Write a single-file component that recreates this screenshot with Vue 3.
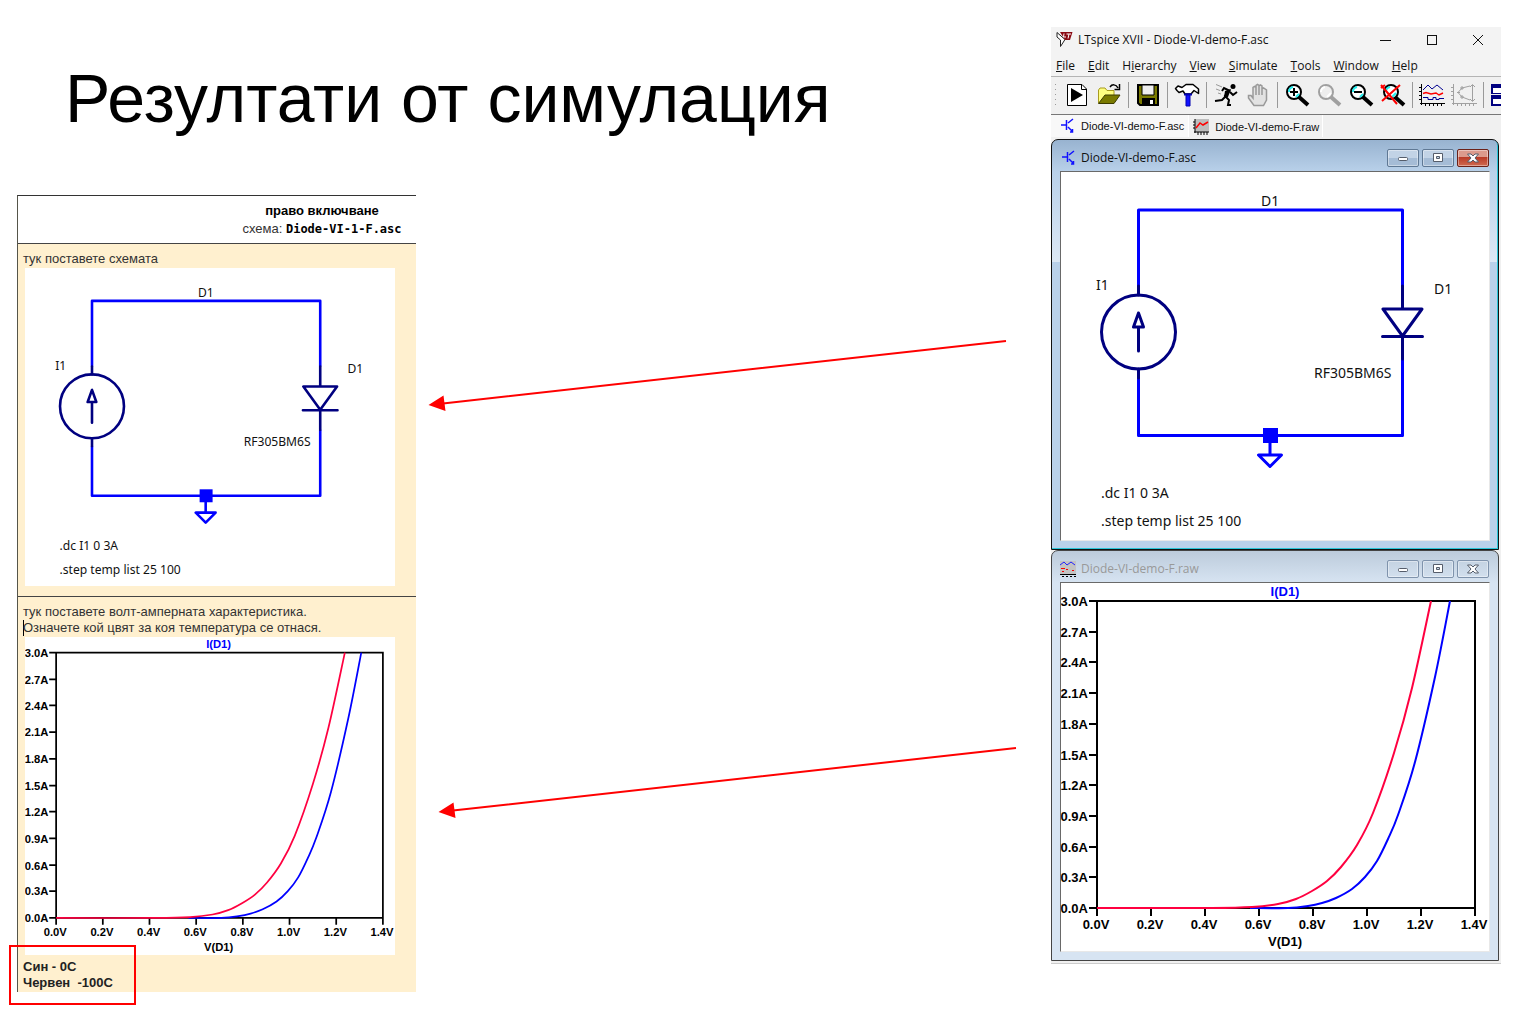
<script setup>
const wires = 'M76.5 114V38H340.5V114M340.5 187V263.5H76.5V206M208 264V283M196.5 283H219.5L208 294.5Z'
const parts =
  'M76.5 114V123M76.5 197V206M76.5 179V155M71.5 155H81.5L76.5 141Z' +
  'M340.5 114V137M340.5 164V187M321 137H360L340.5 164ZM320.5 164.5H360.5'
const labels = [
  { x: 199, y: 34, text: 'D1' },
  { x: 34, y: 118, text: 'I1' },
  { x: 372, y: 122, text: 'D1' },
  { x: 252, y: 206, text: 'RF305BM6S' },
  { x: 39, y: 326, text: '.dc I1 0 3A' },
  { x: 39, y: 354, text: '.step temp list 25 100' },
]

const left = 35
const right = 413
const top = 18
const bottom = 325
const xTicks = Array.from({ length: 8 }, (_, i) => ({
  pos: Math.round(left + (i * (right - left)) / 7),
  text: (i * 0.2).toFixed(1) + 'V',
}))
const yTicks = Array.from({ length: 11 }, (_, i) => ({
  pos: Math.round(bottom - (i * (bottom - top)) / 10),
  text: (i * 0.3).toFixed(1) + 'A',
}))
const axes =
  `M${left} ${top}H${right}V${bottom}H${left}Z` +
  xTicks.map((t) => `M${t.pos} ${bottom}v8`).join('') +
  yTicks.map((t) => `M${left} ${t.pos}h-8`).join('')

// Smooth line through the sampled points (Catmull-Rom as cubic Béziers)
function curve(p) {
  let d = `M${p[0]}`
  for (let i = 0; i < p.length - 1; i++) {
    const a = p[i - 1] || p[i]
    const b = p[i]
    const c = p[i + 1]
    const e = p[i + 2] || c
    d += `C${b[0] + (c[0] - a[0]) / 6} ${b[1] + (c[1] - a[1]) / 6} ${c[0] - (e[0] - b[0]) / 6} ${c[1] - (e[1] - b[1]) / 6} ${c}`
  }
  return d
}
const hot = curve([[35, 325], [150, 325], [190, 324], [216, 321], [234, 316], [250, 308], [265, 298], [279, 284], [295, 262], [311, 230], [332, 170], [350, 105], [369, 18]])
const cold = curve([[188, 325], [226, 325], [246, 323], [260, 320], [274, 315], [290, 306], [303, 294], [315, 278], [326, 256], [336, 232], [353, 179], [373, 94], [388, 18]])

const menus = ['File', 'Edit', 'Hierarchy', 'View', 'Simulate', 'Tools', 'Window', 'Help'].map((name) => {
  const at = name === 'Hierarchy' ? 1 : 0
  return { name, pre: name.slice(0, at), key: name[at], post: name.slice(at + 1) }
})
const children = [
  { title: 'Diode-VI-demo-F.asc', active: true },
  { title: 'Diode-VI-demo-F.raw', active: false },
]
</script>

<template>
  <main class="slide">
    <div class="body">
      <h1>Резултати от симулация</h1>
      <div class="content">
        <article class="report">
          <header class="report-head">
            <strong>право включване</strong>
            <div>схема: <code>Diode-VI-1-F.asc</code></div>
          </header>
          <section class="cell">
            <p>тук поставете схемата</p>
            <figure>
              <svg viewBox="-1 0 428 368" class="drawing">
                <path :d="wires" class="wire" />
                <rect x="201" y="256" width="15" height="15" class="node" />
                <circle cx="76.5" cy="160" r="37" class="part" />
                <path :d="parts" class="part" />
                <text v-for="l in labels" :key="l.text + l.x" :x="l.x" :y="l.y" class="label">{{ l.text }}</text>
              </svg>
            </figure>
          </section>
          <section class="cell last">
            <p>тук поставете волт-амперната характеристика.</p>
            <p class="caret">Означете кой цвят за коя температура се отнася.</p>
            <figure>
              <svg viewBox="-1 0 428 368" class="drawing">
                <path :d="axes" class="axes" />
                <path :d="cold" class="cold" />
                <path :d="hot" class="hot" />
                <text x="223" y="13" class="tick mid trace">I(D1)</text>
                <text v-for="t in yTicks" :key="t.text" x="26" :y="t.pos + 5" class="tick end">{{ t.text }}</text>
                <text v-for="t in xTicks" :key="t.text" :x="t.pos - 1" y="346" class="tick mid">{{ t.text }}</text>
                <text x="223" y="363" class="tick mid">V(D1)</text>
              </svg>
            </figure>
            <div class="notes">
              <p>Син - 0C</p>
              <p>Червен&nbsp; -100C</p>
              <span class="mark"></span>
            </div>
          </section>
        </article>
        <svg viewBox="0 0 635 797" class="arrows">
          <path d="M590 146L27 208.500M600 553L37 615.500" />
          <path d="M12.500 210L27.500 200.500L29.500 216ZM22.500 617L37.500 607.500L39.500 623Z" class="head" />
        </svg>
      </div>
    </div>

    <section class="app">
      <header class="app-title">
        <svg width="17" height="17" viewBox="0 0 17 17">
          <path d="M1 1.500L9 8.500L4.500 15.500V9L1 6Z" fill="#fff" stroke="#222" />
          <path d="M4 1H16.500L14 9H9Z" fill="#8b0a14" />
          <path d="M8 2.500L7.500 6H10M10.500 3H15M13 3L12 7.500" fill="none" stroke="#fff" />
        </svg>
        <span class="app-name">LTspice XVII - Diode-VI-demo-F.asc</span>
        <button aria-label="Minimize"><svg width="12" height="12"><path d="M0 6.500H11" /></svg></button>
        <button aria-label="Maximize"><svg width="12" height="12"><rect x="1.500" y="1.500" width="9" height="9" /></svg></button>
        <button aria-label="Close"><svg width="12" height="12"><path d="M1 1L11 11M11 1L1 11" /></svg></button>
      </header>
      <nav class="menu">
        <button v-for="m in menus" :key="m.name">{{ m.pre }}<u>{{ m.key }}</u>{{ m.post }}</button>
      </nav>
      <div class="toolbar">
        <span class="grip"></span>
        <button aria-label="Run">
          <svg width="24" height="24" viewBox="0 0 24 24">
            <path d="M2.500 1.500H17L21.500 6V22.500H2.500Z" fill="#fff" stroke="#000" />
            <path d="M16.500 1.500V6.500H21.500" fill="none" stroke="#000" />
            <path d="M6 5L18 12L6 19Z" />
          </svg>
        </button>
        <button aria-label="Open">
          <svg width="24" height="24" viewBox="0 0 24 24">
            <path d="M1.500 20V7L3 5H8L10 7.500H17V12" fill="#ffff80" stroke="#a89c20" />
            <path d="M1.500 20.500L8 12H23L17 20.500Z" fill="#7a7a00" stroke="#3c3c00" />
            <path d="M13 4C15 1 19 1 21 5M22.500 1V6.500H17.500" fill="none" stroke="#000" stroke-width="1.500" />
          </svg>
        </button>
        <i></i>
        <button aria-label="Save">
          <svg width="24" height="24" viewBox="0 0 24 24">
            <path d="M2 2H22V22H4L2 20Z" fill="#7a7a00" stroke="#000" stroke-width="2" />
            <path d="M6 2H18V12H6Z" fill="#efefef" stroke="#000" />
            <path d="M6 15H19V22H6Z" />
            <path d="M14 17H17V21H14Z" fill="#fff" />
          </svg>
        </button>
        <i></i>
        <button aria-label="Control panel">
          <svg width="26" height="24" viewBox="0 0 26 24">
            <path d="M1.500 5.500L4 3L8 4.500L12 1.500H19L24.500 6V10.500L20 7.500L17 11H11L9 8L5 9.500L3 7.500Z" fill="#fff" stroke="#000" stroke-width="1.500" stroke-linejoin="round" />
            <path d="M12 11H16V23H12Z" fill="#1010ff" stroke="#0000b0" />
            <path d="M10 11.500H18" stroke="#0000b0" stroke-width="2" />
          </svg>
        </button>
        <i></i>
        <button aria-label="Simulate">
          <svg width="24" height="24" viewBox="0 0 24 24">
            <circle cx="19" cy="3.500" r="2.500" />
            <path d="M16 7L11 13L15 17L14 22L17 22M12 13L8 17L1 18M16 8L10 5L8 8M16 9L19 12L23 9" fill="none" stroke="#000" stroke-width="2" />
            <path d="M17 6L11 8L10 14L14 14Z" />
            <path d="M2 1.500L8 4M2 6L6 7.500M4 10L7 11" stroke="#999" />
          </svg>
        </button>
        <button aria-label="Halt">
          <svg width="24" height="24" viewBox="0 0 24 24">
            <path d="M8 22.500L2.500 15V12.500H5L7 15V4.500L8.500 3.500L10 4.500V12V2.500L11.500 1.500L13 2.500V12V3L14.500 2L16 3V12V6L17.500 5L20.500 7V17L17.500 22.500Z" fill="#e2e2e2" stroke="#999" stroke-width="1.500" />
          </svg>
        </button>
        <i></i>
        <button aria-label="Zoom in">
          <svg width="26" height="24" viewBox="0 0 26 24">
            <path d="M15 14L24 22" stroke="#000" stroke-width="4" />
            <circle cx="10" cy="9" r="7" fill="#fff" stroke="#000" stroke-width="2" />
            <path d="M5 9A5 5 0 0 1 9 4M12 14L15 11" fill="none" stroke="#2ee" stroke-width="2" />
            <path d="M6 9H14M10 5V13" stroke="#000" stroke-width="2" />
          </svg>
        </button>
        <button aria-label="Pan">
          <svg width="26" height="24" viewBox="0 0 26 24">
            <path d="M15 14L24 22" stroke="#a0a0a0" stroke-width="4" />
            <circle cx="10" cy="9" r="7" fill="#eee" stroke="#a0a0a0" stroke-width="2" />
            <path d="M5 9A5 5 0 0 1 9 4M11 14L15 10" fill="none" stroke="#fff" stroke-width="2" />
          </svg>
        </button>
        <button aria-label="Zoom out">
          <svg width="26" height="24" viewBox="0 0 26 24">
            <path d="M15 14L24 22" stroke="#000" stroke-width="4" />
            <circle cx="10" cy="9" r="7" fill="#fff" stroke="#000" stroke-width="2" />
            <path d="M5 9A5 5 0 0 1 9 4M12 14L15 11" fill="none" stroke="#2ee" stroke-width="2" />
            <path d="M6 9H14" stroke="#000" stroke-width="2" />
          </svg>
        </button>
        <button aria-label="Zoom to fit">
          <svg width="26" height="24" viewBox="0 0 26 24">
            <path d="M15 14L24 22" stroke="#000" stroke-width="4" />
            <circle cx="11" cy="9" r="7" fill="#fff" stroke="#000" stroke-width="2" />
            <path d="M6 9A5 5 0 0 1 10 4M12 14L16 10" fill="none" stroke="#2ee" stroke-width="2" />
            <path d="M1 2L17 21M20 2L2 18" stroke="#f00" stroke-width="2" />
            <path d="M1 5L5 2" stroke="#f00" stroke-width="2" />
          </svg>
        </button>
        <i></i>
        <button aria-label="Autorange">
          <svg width="26" height="24" viewBox="0 0 26 24" fill="none">
            <path d="M2.500 1V22M1 20.500H26M0 4.500H2M0 8.500H2M0 12.500H2M0 16.500H2M6.500 20V23M10.500 20V23M14.500 20V23M18.500 20V23M22.500 20V23" stroke="#000" />
            <path d="M4 7L9 2L13 6L18 2L24 7" stroke="#000090" />
            <path d="M4 10.500L7 9.500L12 11L17 10L20 12L24 10" stroke="#f00" stroke-width="1.500" />
            <path d="M4 14.500H9V16.500H14V14.500H17V16.500H20V15.500H25" stroke="#000090" />
          </svg>
        </button>
        <button aria-label="FFT">
          <svg width="26" height="24" viewBox="0 0 26 24" fill="none" stroke="#a0a0a0">
            <path d="M2.500 1V22M1 20.500H26M0 4.500H2M0 8.500H2M0 12.500H2M0 16.500H2M6.500 20V23M10.500 20V23M14.500 20V23M18.500 20V23M22.500 20V23" />
            <path d="M21.500 2V18M19 4L21.500 1.500L24 4M19 16L21.500 18.500L24 16M19 3L11 5L7 9.500L11 14L19 17M6 9.500H9M11 3V7M9 5H13M11 12V16M9 14H13" />
          </svg>
        </button>
        <i></i>
        <button aria-label="Tile windows">
          <svg width="24" height="24" viewBox="0 0 24 24">
            <path d="M0 1H24V23H0Z" fill="#000080" />
            <path d="M2 5H24V10H2ZM2 16H24V21H2Z" fill="#fff" />
            <path d="M0 11.500H24" stroke="#eee" />
          </svg>
        </button>
      </div>
      <div class="tabs">
        <button class="current">
          <svg width="14" height="16" viewBox="0 0 14 16" class="asc"><path d="M0 7H5M5.500 2V12M7 5L12 1M7 9L11 13M11.500 11V14H9" /></svg>
          Diode-VI-demo-F.asc
        </button>
        <button>
          <svg width="16" height="16" viewBox="0 0 16 16">
            <path d="M2 0H16V13H2Z" fill="#bdbdbd" />
            <path d="M2 0V14M1 13H16M0 3H2M0 6H2M0 9H2M5 13V16M8 13V16M11 13V16M14 13V16" stroke="#000" />
            <path d="M3 9L7 4L10 6L15 3" fill="none" stroke="#f00" stroke-width="1.500" />
          </svg>
          Diode-VI-demo-F.raw
        </button>
      </div>

      <section v-for="c in children" :key="c.title" class="child" :class="{ active: c.active }">
        <header>
          <svg v-if="c.active" width="16" height="16" viewBox="-2 0 16 16" class="asc"><path d="M0 7H5M5.500 2V12M7 5L12 1M7 9L11 13M11.500 11V14H9" /></svg>
          <svg v-else width="16" height="16" viewBox="0 0 16 16">
            <path d="M0 0H16V14H0Z" fill="#c3c3c3" />
            <path d="M0 4L4 1L7 4L11 1L15 4" fill="none" stroke="#22f" />
            <path d="M1 7.500H5M6 8.500H8M12 9.500H14M2 10.500H4" stroke="#f00" />
            <path d="M0 13.500H16M2 15.500H4M6 15.500H8M10 15.500H12M14 15.500H16" stroke="#000" />
          </svg>
          <span>{{ c.title }}</span>
          <button aria-label="Minimize"><svg width="12" height="10"><rect x="1.500" y="4.500" width="9" height="3" rx="1" /></svg></button>
          <button aria-label="Restore"><svg width="12" height="10"><path d="M1.500 0.500H10.500V8.500H1.500ZM4.500 3.500H7.500V5.500H4.500Z" fill-rule="evenodd" /></svg></button>
          <button aria-label="Close" class="close"><svg width="12" height="10"><path d="M0.500 1H4L6 3L8 1H11.500L8 5L11.500 9H8L6 7L4 9H0.500L4 5Z" /></svg></button>
        </header>
        <div class="client">
          <svg v-if="c.active" viewBox="-1 0 428 368" class="drawing">
            <path :d="wires" class="wire" />
            <rect x="201" y="256" width="15" height="15" class="node" />
            <circle cx="76.5" cy="160" r="37" class="part" />
            <path :d="parts" class="part" />
            <text v-for="l in labels" :key="l.text + l.x" :x="l.x" :y="l.y" class="label">{{ l.text }}</text>
          </svg>
          <svg v-else viewBox="-1 0 428 368" class="drawing">
            <path :d="axes" class="axes" />
            <path :d="cold" class="cold" />
            <path :d="hot" class="hot" />
            <text x="223" y="13" class="tick mid trace">I(D1)</text>
            <text v-for="t in yTicks" :key="t.text" x="26" :y="t.pos + 5" class="tick end">{{ t.text }}</text>
            <text v-for="t in xTicks" :key="t.text" :x="t.pos - 1" y="346" class="tick mid">{{ t.text }}</text>
            <text x="223" y="363" class="tick mid">V(D1)</text>
          </svg>
        </div>
      </section>
    </section>
  </main>
</template>

<style>
body {
  background: #fff;
}
</style>

<style scoped>
.slide {
  display: grid;
  grid-template-columns: 1034fr 450fr;
  align-items: start;
  padding: 0 16px 20px 17px;
  font-family: 'Liberation Sans', Arial, sans-serif;
  font-size: 13px;
  color: #000;
}
p,
figure {
  margin: 0;
}
button {
  border: 0;
  padding: 0;
  background: none;
  font: inherit;
  color: inherit;
}
svg {
  display: block;
}
h1 {
  margin: 0;
  padding: 59px 0 58px 48px;
  font-size: 68px;
  line-height: 78px;
  font-weight: 400;
}
.content {
  display: grid;
  grid-template-columns: 399fr 635fr;
  align-items: start;
}
.report {
  border-top: 1px solid #333;
  border-left: 1px solid #55554a;
}
.report-head {
  padding: 6px 0 5px 210px;
  text-align: center;
  line-height: 18px;
  white-space: nowrap;
  color: #333;
}
.report-head strong {
  color: #000;
}
code {
  font: bold 12px/18px 'DejaVu Sans Mono', monospace;
  color: #000;
}
.cell {
  padding: 7px 0 10px 5px;
  border-top: 1px solid #444;
  background: #fff0cf;
  line-height: 16px;
  color: #333;
}
.cell.last {
  padding-bottom: 1px;
}
.cell p {
  white-space: nowrap;
}
.caret {
  box-shadow: inset 1px 0 0 #000;
}
figure {
  margin: 1px 21px 0 2px;
  background: #fff;
}
.notes {
  position: relative;
  margin-top: 4px;
  font-weight: 700;
  color: #222;
}
.mark {
  position: absolute;
  left: -14px;
  top: -14px;
  width: 123px;
  height: 56px;
  border: 2px solid #f00;
}
.arrows {
  width: 100%;
  fill: none;
  stroke: #f00;
  stroke-width: 2;
}
.arrows .head {
  fill: #f00;
  stroke: none;
}

.drawing {
  width: 100%;
  height: auto;
  background: #fff;
}
.wire {
  fill: none;
  stroke: #00f;
  stroke-width: 3;
  stroke-linejoin: round;
}
.node {
  fill: #00f;
}
.part {
  fill: none;
  stroke: #000080;
  stroke-width: 3;
  stroke-linecap: round;
  stroke-linejoin: round;
}
.label {
  font: 14px 'Noto Sans', sans-serif;
  fill: #111;
}
.axes,
.hot,
.cold {
  fill: none;
  stroke: #000;
  stroke-width: 2;
}
.hot {
  stroke: #ff0040;
}
.cold {
  stroke: #00f;
}
.tick {
  font: bold 13px 'Liberation Sans', Arial, sans-serif;
}
.mid {
  text-anchor: middle;
}
.end {
  text-anchor: end;
}
.trace {
  fill: #00f;
}

.app {
  margin-top: 27px;
  padding-bottom: 2px;
  background: #f0f0f0;
  border-bottom: 1px solid #ccc;
  font: 12px/16px 'Open Sans', sans-serif;
  color: #111;
  min-width: 0;
}
.app-title {
  display: flex;
  align-items: center;
  height: 25px;
  padding-left: 5px;
  background: #f3f3f3;
}
.app-name {
  flex: 1;
  padding-left: 5px;
  white-space: nowrap;
}
.app-title button {
  display: grid;
  place-items: center;
  width: 46px;
  height: 24px;
}
.app-title button svg {
  fill: none;
  stroke: #111;
}
.menu {
  display: flex;
  gap: 13px;
  height: 21px;
  padding: 3px 0 0 5px;
  background: #f3f3f3;
  border-bottom: 1px solid #b4b4b4;
}
.toolbar {
  display: flex;
  align-items: center;
  height: 35px;
  padding-bottom: 2px;
  border-bottom: 1px solid #777;
  overflow: hidden;
}
.toolbar > * {
  flex: none;
}
.toolbar button {
  display: grid;
  place-items: center;
  width: 32px;
  height: 32px;
}
.toolbar i {
  width: 7px;
  height: 26px;
  background: linear-gradient(#999, #999) 3px 0 / 1px 100% no-repeat;
}
.grip {
  width: 10px;
  height: 26px;
  background: radial-gradient(circle, #999 1px, transparent 1px) 3px 0 / 3px 5px repeat-y;
}
.tabs {
  display: flex;
  align-items: flex-start;
  height: 24px;
  font: 11px/16px 'Liberation Sans', Arial, sans-serif;
}
.tabs button {
  display: flex;
  align-items: center;
  gap: 6px;
  height: 22px;
  padding: 2px 3px 0 4px;
  border-right: 1px solid #fff;
  white-space: nowrap;
}
.tabs .current {
  padding: 0 4px 0 10px;
  background: #f8f8f8;
}
.asc {
  fill: none;
  stroke: #11f;
  stroke-width: 1.5;
}
.child {
  margin-right: 2px;
  padding: 0 8px 8px;
  border: 1px solid #444;
  border-radius: 7px 7px 0 0;
  background: linear-gradient(#bccbdb, #d7e4f2 32px);
  color: #999;
}
.child.active {
  border-color: #111;
  background: linear-gradient(#98b3d0, #b9d1ea 32px, #dce8f5 122px, #b9d1ea 122px);
  box-shadow: inset -1px -1px 0 #29c5d8;
  color: #111;
}
.child header {
  display: flex;
  align-items: center;
  gap: 3px;
  height: 31px;
  padding: 5px 1px 0 0;
  box-sizing: border-box;
}
.child header span {
  flex: 1;
  padding-left: 2px;
  white-space: nowrap;
}
.child header button {
  display: grid;
  place-items: center;
  box-sizing: border-box;
  width: 32px;
  height: 18px;
  border: 1px solid #7f93ac;
  border-radius: 2px;
  box-shadow: inset 0 0 0 1px #ffffff66;
}
.child header button svg {
  fill: #fff;
  stroke: #555d6b;
}
.child.active header button {
  background: linear-gradient(#c2d3e6 50%, #a5bcd6 50%);
  border-color: #5f7894;
}
.child.active header .close {
  background: linear-gradient(#dc9a8c 45%, #b93a26 45%, #cf6a50);
  border-color: #6b2118;
}
.client {
  border: 1px solid #e8e8e8;
  border-top-color: #696969;
  border-left-color: #696969;
}
</style>
